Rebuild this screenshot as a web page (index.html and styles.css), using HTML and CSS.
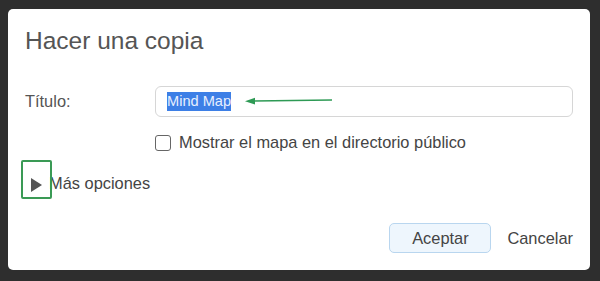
FILE: index.html
```html
<!DOCTYPE html>
<html lang="es">

<head>
  <meta charset="UTF-8">
  <title>Hacer una copia</title>
  <link rel="stylesheet" href="styles.css">
</head>

<body>
  <div class="dialog">
    <h1 class="title">Hacer una copia</h1>

    <div class="row">
      <label class="label">Título:</label>
      <div class="field">
        <div class="input"><span class="sel">Mind Map</span></div>
        <svg class="arrow" width="100" height="12" viewBox="0 0 100 12">
          <path d="M10 6 L88 5" stroke="#2e9a55" stroke-width="1.6" fill="none"/>
          <path d="M1 6.2 L11 2.8 L11 9.4 Z" fill="#2e9a55"/>
        </svg>
      </div>
    </div>

    <div class="row">
      <span></span>
      <label class="check"><span class="box"></span>Mostrar el mapa en el directorio público</label>
    </div>

    <div class="more">
      <span class="tri"></span>Más opciones
      <span class="mark"></span>
    </div>

    <div class="actions">
      <button class="btn ok">Aceptar</button>
      <button class="btn cancel">Cancelar</button>
    </div>
  </div>
</body>

</html>
```

FILE: styles.css
```css
* {
  box-sizing: border-box;
}

body {
  margin: 0;
  background: #2e2e2e;
  font-family: "Liberation Sans", Arial, sans-serif;
  color: #444;
}

.dialog {
  margin: 9px 0 0 8px;
  width: 582px;
  height: 261px;
  background: #fff;
  border-radius: 5px;
  padding: 0 17px;
  position: relative;
}

.title {
  margin: 0;
  padding-top: 18px;
  font-size: 24.5px;
  font-weight: normal;
  color: #555;
  line-height: 28px;
}

.row {
  display: grid;
  grid-template-columns: 130px 1fr;
  align-items: center;
}

.title + .row {
  margin-top: 31px;
}

.label {
  font-size: 16.4px;
  color: #555;
}

.field {
  position: relative;
}

.input {
  height: 31px;
  border: 1px solid #d6d6d6;
  border-radius: 6px;
  padding: 0 0 0 11px;
  display: flex;
  align-items: center;
  font-size: 14.6px;
}

.sel {
  background: #3d7fe6;
  color: #e8efff;
  line-height: 19px;
}

.arrow {
  position: absolute;
  left: 89px;
  top: 9px;
}

.check {
  margin-top: 16px;
  display: flex;
  align-items: center;
  font-size: 16.4px;
  color: #444;
}

.box {
  width: 16px;
  height: 16px;
  border: 1px solid #666;
  border-radius: 3px;
  margin: 0 8px 0 0;
}

.more {
  margin-top: 22px;
  display: flex;
  align-items: center;
  font-size: 16.4px;
  color: #444;
  position: relative;
}

.tri {
  width: 0;
  height: 0;
  border-left: 11px solid #555;
  border-top: 7px solid transparent;
  border-bottom: 7px solid transparent;
  margin: 2px 7px 0 6px;
}

.mark {
  position: absolute;
  left: -4px;
  top: -14px;
  width: 31px;
  height: 39px;
  border: 2px solid #3a9a55;
  border-radius: 2px;
}

.actions {
  position: absolute;
  right: 17px;
  bottom: 17px;
  display: flex;
  align-items: center;
  gap: 16px;
}

.btn {
  font-family: inherit;
  font-size: 16.4px;
  color: #444;
  background: none;
  border: none;
  padding: 0;
}

.ok {
  width: 102px;
  height: 30px;
  background: #eef6fd;
  border: 1px solid #b9d6ef;
  border-radius: 5px;
}
```
